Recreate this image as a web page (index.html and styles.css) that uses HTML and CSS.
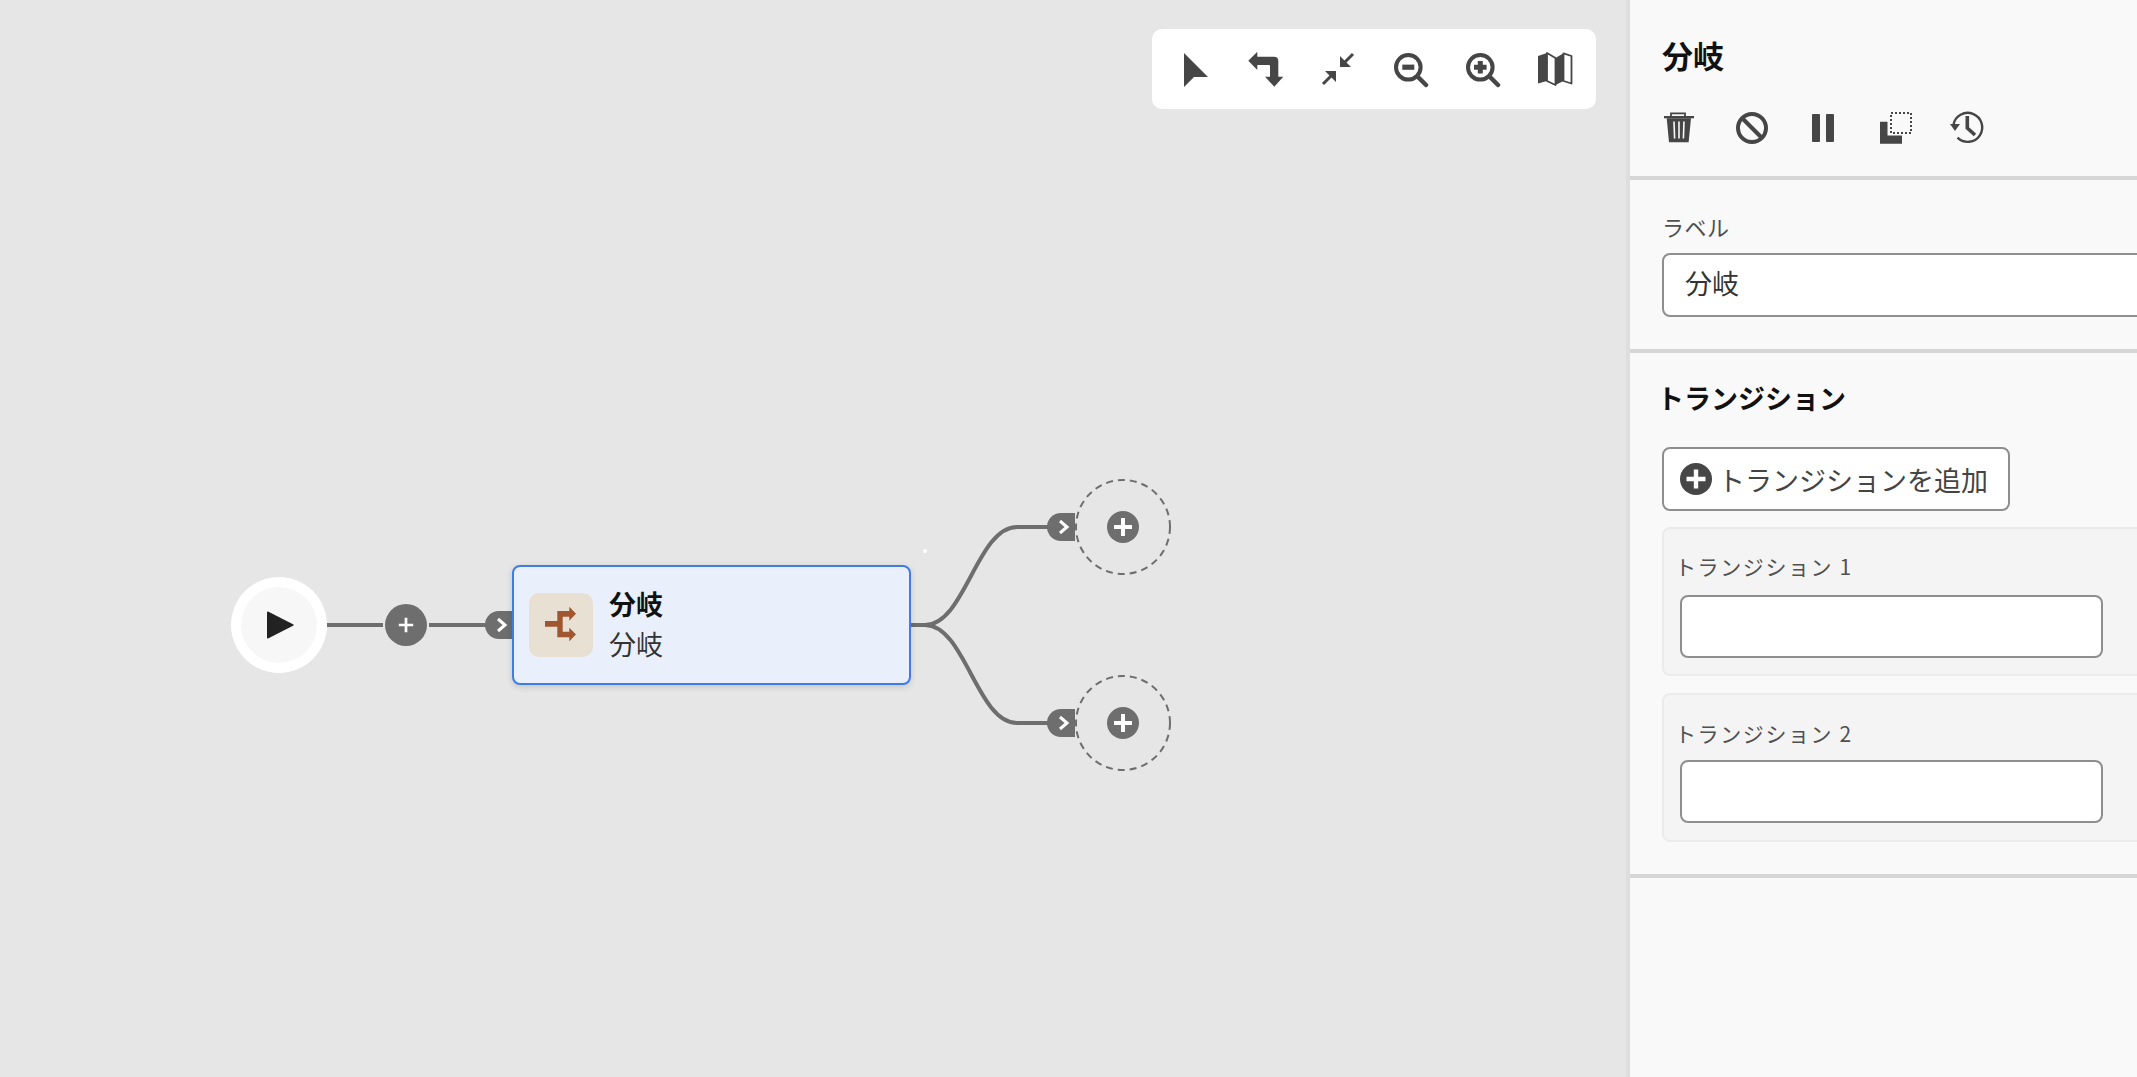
FILE: index.html
```html
<!DOCTYPE html>
<html lang="ja">
<head>
    <meta charset="UTF-8">
    <title>分岐</title>
    <link rel="stylesheet" href="styles.css">
</head>
<body>
    <main class="canvas">
        <!-- Toolbar -->
        <div class="toolbar">
            <button class="icon-btn"><svg viewBox="-3 0 40 40"><path d="M8 4 32 28H18L8 38Z"/></svg></button>
            <button class="icon-btn"><svg viewBox="0 0 40 40"><path d="M3.3 11.7 12.3 2.7V7.7H29Q33.3 7.7 33.3 12V27.7H38.3L29.3 37.7 20 27.7H25V17Q25 16 24 16H12.3V21Z"/></svg></button>
            <button class="icon-btn"><svg viewBox="-1 0 40 40"><path d="M22 7V18H33ZM7 22H18V33Z"/><path class="line" d="M26 14 35 5M13 27 5 35" stroke-width="3"/></svg></button>
            <button class="icon-btn"><svg viewBox="-1 0 40 40"><circle class="line" cx="18.3" cy="18.3" r="12.3" stroke-width="4"/><path class="line" d="M28 28 36 36" stroke-width="4.5" stroke-linecap="round"/><rect x="12.3" y="15.6" width="12" height="5.2"/></svg></button>
            <button class="icon-btn"><svg viewBox="-1 0 40 40"><circle class="line" cx="18.3" cy="18.3" r="12.3" stroke-width="4"/><path class="line" d="M28 28 36 36" stroke-width="4.5" stroke-linecap="round"/><path d="M15.8 12H20.8V15.8H24.6V20.8H20.8V24.6H15.8V20.8H12V15.8H15.8Z"/></svg></button>
            <button class="icon-btn"><svg viewBox="3 4 40 40"><path d="M8 11 17 8V36L8 38.5Z"/><path d="M17 8 25.5 13V40L17 36Z" fill="#fff"/><path d="M25.5 13 33.5 8.3V36L25.5 40Z"/><path class="line" d="M17 8 25.5 13V40L17 36ZM33.5 8.3 41.5 11V38.5L33.5 36Z" stroke-width="1.8" stroke-linejoin="round"/></svg></button>
        </div>

        <!-- Connections -->
        <svg class="edges" viewBox="0 0 1626 1077">
            <path d="M327 625H383M429 625H490"/>
            <path d="M908 625H925C965 625 977 527 1017 527H1050"/>
            <path d="M908 625H925C965 625 977 723 1017 723H1050"/>
        </svg>

        <div class="start-node">
            <div class="start-inner"><svg viewBox="0 0 28 28"><path d="M1 1.5Q1 0 2.5 .7L27.5 13.5Q28 14 27.5 14.5L2.5 27.3Q1 28 1 26.5Z"/></svg></div>
        </div>

        <div class="add-btn small" id="add-1"><svg viewBox="0 0 20 20"><path d="M10 2V18M2 10H18"/></svg></div>

        <div class="port port-in" id="port-1"><svg viewBox="0 0 12 16"><path d="M2 2 9 8 2 14"/></svg></div>
        <div class="activity">
            <div class="activity-icon"><svg viewBox="0 0 50 50"><path d="M10 21H22.3V11H34.3V6.7L41 13.8 34.3 20.7V16.7H27.7V31.7H34.3V27.7L41 34.5 34.3 41.3V37.3H22.3V26.7H10Z"/></svg></div>
            <div class="activity-text">
                <div class="activity-title">分岐</div>
                <div class="activity-sub">分岐</div>
            </div>
        </div>

        <div class="port" id="port-2"><svg viewBox="0 0 12 16"><path d="M2 2 9 8 2 14"/></svg></div>
        <div class="placeholder" id="slot-1">
            <svg class="ring" viewBox="0 0 96 96"><circle cx="48" cy="48" r="47"/></svg>
            <div class="add-btn"><svg viewBox="0 0 20 20"><path d="M10 1V19M1 10H19"/></svg></div>
        </div>

        <div class="port" id="port-3"><svg viewBox="0 0 12 16"><path d="M2 2 9 8 2 14"/></svg></div>
        <div class="placeholder" id="slot-2">
            <svg class="ring" viewBox="0 0 96 96"><circle cx="48" cy="48" r="47"/></svg>
            <div class="add-btn"><svg viewBox="0 0 20 20"><path d="M10 1V19M1 10H19"/></svg></div>
        </div>

        <div class="dot"></div>
    </main>

    <aside class="panel">
        <section class="panel-section head">
            <h2 class="panel-title">分岐</h2>
            <div class="actions">
                <button class="icon-btn"><svg viewBox="4 3 40 40"><path d="M9 11H39V13.3H9Z"/><path class="line" d="M16 11.5V8.3H30V11.5" stroke-width="1.8"/><path d="M11.7 13.3H36L33.6 37.3H14Z"/><path class="slit" d="M19 16.5 19.6 33.5M24 16.5V33.5M29 16.5 28.4 33.5"/></svg></button>
                <button class="icon-btn"><svg viewBox="0 0 40 40"><circle class="line" cx="21" cy="20" r="14" stroke-width="4"/><path class="line" d="M11.5 10.5 30.5 29.5" stroke-width="4"/></svg></button>
                <button class="icon-btn"><svg viewBox="0 0 40 40"><rect x="9" y="6" width="8" height="28" rx="1"/><rect x="23" y="6" width="8" height="28" rx="1"/></svg></button>
                <button class="icon-btn"><svg viewBox="5 3 40 40"><path d="M10 16.7H17.5V30.5H32V38.7H10Z"/><rect class="line" x="21" y="8" width="20" height="20" stroke-width="2" stroke-dasharray="2 2"/></svg></button>
                <button class="icon-btn"><svg viewBox="77 3 40 40"><path class="line" d="M83.4 20A14.5 14.5 0 1 1 87.5 32.7" stroke-width="2.4"/><path d="M80 19H90L85 26Z"/><path class="line" d="M97.3 11V23L105 30" stroke-width="3.6"/></svg></button>
            </div>
        </section>

        <section class="panel-section field-section">
            <label class="field-label">ラベル</label>
            <input class="text-input wide" type="text" value="分岐">
        </section>

        <section class="panel-section transitions">
            <h3 class="section-title">トランジション</h3>
            <button class="add-transition">
                <svg viewBox="0 0 32 32"><circle cx="16" cy="16" r="16"/><path d="M16 6.5V25.5M6.5 16H25.5" stroke="#fff" stroke-width="4.4"/></svg>
                <span>トランジションを追加</span>
            </button>
            <div class="card">
                <label class="card-label">トランジション 1</label>
                <input class="text-input" type="text">
            </div>
            <div class="card">
                <label class="card-label">トランジション 2</label>
                <input class="text-input" type="text">
            </div>
        </section>
    </aside>
</body>
</html>
```

FILE: styles.css
```css
* {
    box-sizing: border-box;
}

body {
    margin: 0;
    height: 100vh;
    display: flex;
    overflow: hidden;
    background-color: #e6e6e6;
    color: #2c2c2c;
    font-family: "Noto Sans CJK JP", "Liberation Sans", sans-serif;
}

svg {
    display: block;
    fill: #464646;
}

.line {
    fill: none;
    stroke: #464646;
}

.slit {
    fill: none;
    stroke: #f8f8f8;
    stroke-width: 1.6;
}

button {
    font-family: inherit;
}

.icon-btn {
    width: 72px;
    height: 40px;
    padding: 0;
    border: none;
    background: none;
    display: flex;
    justify-content: center;
}

.icon-btn svg {
    width: 40px;
    height: 40px;
}

/* canvas */
.canvas {
    position: relative;
    flex: 1;
}

.toolbar {
    position: absolute;
    top: 29px;
    left: 1152px;
    width: 444px;
    height: 80px;
    padding: 20px 0 0 5px;
    display: flex;
    background-color: #fff;
    border-radius: 10px;
}

.edges {
    position: absolute;
    top: 0;
    left: 0;
    width: 1626px;
    height: 1077px;
    fill: none;
}

.edges path {
    fill: none;
    stroke: #6e6e6e;
    stroke-width: 4;
}

.start-node {
    position: absolute;
    left: 231px;
    top: 577px;
    width: 96px;
    height: 96px;
    padding: 10px;
    background-color: #fff;
    border-radius: 50%;
}

.start-inner {
    width: 76px;
    height: 76px;
    padding: 24px 0 0 25px;
    background-color: #f7f7f7;
    border-radius: 50%;
}

.start-inner svg {
    width: 28px;
    height: 28px;
    fill: #222;
}

.add-btn {
    width: 32px;
    height: 32px;
    padding: 6px;
    background-color: #6e6e6e;
    border-radius: 50%;
}

.add-btn path {
    fill: none;
    stroke: #fff;
    stroke-width: 4;
}

.add-btn.small {
    position: absolute;
    left: 385px;
    top: 604px;
    width: 42px;
    height: 42px;
    padding: 12px;
}

.add-btn.small path {
    stroke-width: 3;
}

.port {
    position: absolute;
    width: 28px;
    height: 28px;
    padding: 6px 0 0 11px;
    background-color: #6e6e6e;
    border-radius: 14px 0 0 14px;
}

.port svg {
    width: 12px;
    height: 16px;
}

.port path {
    fill: none;
    stroke: #fff;
    stroke-width: 3;
}

.port-in {
    left: 485px;
    top: 611px;
}

#port-2 {
    left: 1047px;
    top: 513px;
}

#port-3 {
    left: 1047px;
    top: 709px;
}

.placeholder {
    position: absolute;
    left: 1075px;
    width: 96px;
    height: 96px;
    display: flex;
    justify-content: center;
    align-items: center;
}

.ring {
    position: absolute;
    top: 0;
    left: 0;
    width: 96px;
    height: 96px;
    fill: none;
}

.ring circle {
    fill: none;
    stroke: #6e6e6e;
    stroke-width: 2;
    stroke-dasharray: 7 5;
}

#slot-1 {
    top: 479px;
}

#slot-2 {
    top: 675px;
}

.activity {
    position: absolute;
    left: 512px;
    top: 565px;
    width: 399px;
    height: 120px;
    padding: 0 15px 2px;
    display: flex;
    align-items: center;
    gap: 16px;
    background-color: #e9effb;
    border: 2px solid #3f7ce8;
    border-radius: 8px;
    box-shadow: 0 2px 6px rgba(0, 0, 0, 0.15);
}

.activity-icon {
    width: 64px;
    height: 64px;
    margin-top: 2px;
    padding: 7px 6px;
    background-color: #e8e1d3;
    border-radius: 10px;
}

.activity-icon svg {
    width: 50px;
    height: 50px;
    fill: #a0562f;
}

.activity-title {
    font-size: 27px;
    line-height: 40px;
    font-weight: 700;
    color: #111;
}

.activity-sub {
    font-size: 27px;
    line-height: 40px;
    color: #333;
}

.dot {
    position: absolute;
    left: 923px;
    top: 549px;
    width: 4px;
    height: 4px;
    background-color: #fff;
    border-radius: 50%;
}

/* side panel */
.panel {
    width: 511px;
    flex-shrink: 0;
    overflow: hidden;
    background-color: #f9f9f9;
    border-left: 4px solid #dedede;
}

.panel-section {
    padding: 32px 0 32px 32px;
    border-bottom: 4px solid #d6d6d6;
}

.head {
    height: 180px;
    padding: 39px 0 0 0;
}

.panel-title {
    margin: 0 0 38px 32px;
    font-size: 31px;
    line-height: 31px;
    font-weight: 700;
    color: #111;
}

.actions {
    padding-left: 13px;
    display: flex;
}

.field-section {
    padding-top: 31px;
}

.field-label {
    display: block;
    margin-bottom: 11px;
    font-size: 22px;
    line-height: 31px;
    letter-spacing: 0.5px;
    color: #505050;
}

.text-input {
    display: block;
    width: 423px;
    height: 63px;
    padding: 0 21px 5px;
    font-family: inherit;
    font-size: 27px;
    color: #333;
    background-color: #fff;
    border: 2px solid #8e8e8e;
    border-radius: 8px;
    outline: none;
}

.text-input.wide {
    width: 520px;
    height: 64px;
}

.transitions {
    padding-top: 29px;
}

.section-title {
    margin: 0 0 33px -5px;
    font-size: 27px;
    line-height: 32px;
    font-weight: 700;
    color: #111;
}

.add-transition {
    width: 348px;
    height: 64px;
    padding: 0 0 0 16px;
    display: flex;
    align-items: center;
    gap: 6px;
    font-size: 27px;
    white-space: nowrap;
    color: #444;
    background-color: #fff;
    border: 2px solid #8e8e8e;
    border-radius: 8px;
}

.add-transition svg {
    width: 32px;
    height: 32px;
}

.card {
    width: 500px;
    height: 149px;
    margin-top: 16px;
    padding: 22px 0 0 16px;
    background-color: #f4f4f4;
    border: 2px solid #ebebeb;
    border-radius: 8px;
}

.card + .card {
    margin-top: 17px;
}

.card-label {
    display: block;
    margin: 0 0 14px -5px;
    font-size: 21px;
    line-height: 30px;
    letter-spacing: 1.6px;
    color: #505050;
}

.card + .card .card-label {
    margin-top: 1px;
    margin-bottom: 12px;
}
```
